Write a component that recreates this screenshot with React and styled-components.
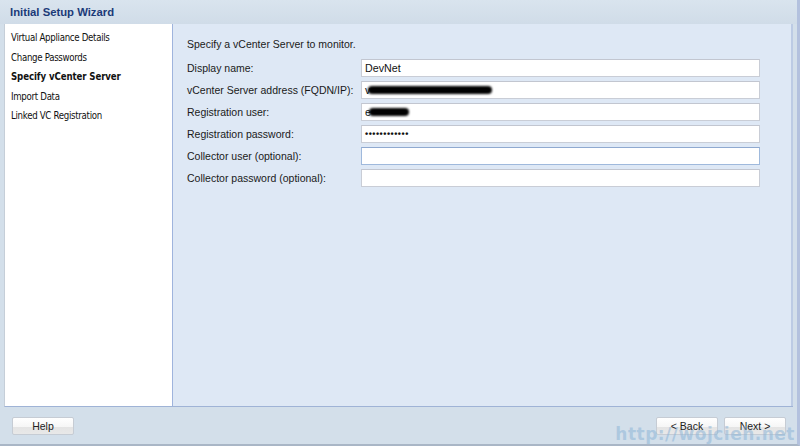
import React from "react";
import styled, { createGlobalStyle } from "styled-components";

const Global = createGlobalStyle`
  html, body { margin: 0; padding: 0; background: #d3dfea; }
  #root { width: 800px; height: 446px; }
`;

const Window = styled.div`
  width: 800px;
  height: 446px;
  box-sizing: border-box;
  background: #d3dfea;
  border-right: 3px solid #b3c1de;
  border-bottom: 2px solid #a9b6c6;
  display: flex;
  flex-direction: column;
  position: relative;
  overflow: hidden;
  font-family: "Liberation Sans", Arial, sans-serif;
`;

const Header = styled.div`
  height: 24px;
  flex: none;
  display: flex;
  align-items: center;
  padding-left: 10px;
  background: linear-gradient(#d9e4ee, #d0dce8);
`;

const Title = styled.div`
  font-family: "Liberation Sans", Arial, sans-serif;
  font-weight: bold;
  font-size: 11.3px;
  color: #1b3a78;
`;

const Body = styled.div`
  flex: 1;
  display: flex;
  margin: 0 4px 0 4px;
  border-left: 1px solid #c5ced8;
  border-bottom: 1px solid #9fb3d6;
`;

const Nav = styled.div`
  width: 167px;
  flex: none;
  background: #ffffff;
  padding-top: 4px;
  display: flex;
  flex-direction: column;
`;

const NavItem = styled.div`
  height: 19.6px;
  line-height: 19.6px;
  padding-left: 6px;
  white-space: nowrap;
  font-family: "DejaVu Sans Condensed", "DejaVu Sans", Tahoma, sans-serif;
  font-stretch: condensed;
  font-size: 9.6px;
  letter-spacing: ${(p) => (p.$active ? "-0.1px" : "-0.3px")};
  color: #111;
  font-weight: ${(p) => (p.$active ? "bold" : "normal")};
`;

const Content = styled.div`
  flex: 1;
  background: #dee8f5;
  border-left: 1px solid #9fb4dd;
  border-right: 2px solid #bccbe4;
  padding: 11px 31px 0 14px;
  display: flex;
  flex-direction: column;
`;

const Intro = styled.div`
  font-size: 10.5px;
  color: #1a1a1a;
  height: 18px;
  line-height: 18px;
  margin-bottom: 6px;
  white-space: nowrap;
`;

const Form = styled.div`
  display: grid;
  grid-template-columns: 174px 1fr;
  row-gap: 4px;
  align-items: center;
`;

const Label = styled.div`
  font-size: 10.5px;
  color: #1a1a1a;
  white-space: nowrap;
`;

const Field = styled.div`
  height: 18px;
  box-sizing: border-box;
  background: #ffffff;
  border: 1px solid ${(p) => (p.$focus ? "#9fb9dc" : "#c9cdd6")};
  border-top-color: ${(p) => (p.$focus ? "#8fa9d0" : "#c2c6d0")};
  display: flex;
  align-items: center;
  padding-left: 3px;
  font-size: 10.7px;
  color: #111;
  overflow: hidden;
`;

const Blob = styled.span`
  display: inline-block;
  height: 8px;
  width: ${(p) => p.$w}px;
  margin-left: -2px;
  background: #000;
  border-radius: 5px;
  filter: blur(1.2px);
`;

const Dots = styled.span`
  font-size: 9px;
  letter-spacing: 0.5px;
  font-weight: bold;
  line-height: 1;
`;

const Footer = styled.div`
  height: 37px;
  flex: none;
  display: flex;
  align-items: center;
  justify-content: space-between;
  padding: 0 11px 0 12px;
`;

const Group = styled.div`
  display: flex;
  gap: 6px;
`;

const Button = styled.div`
  width: 62px;
  height: 18px;
  box-sizing: border-box;
  border: 1px solid #c6ccd4;
  border-radius: 2px;
  background: linear-gradient(#ffffff 0%, #f6f6f6 55%, #e4e4e4 56%, #e8e8e8 100%);
  display: flex;
  align-items: center;
  justify-content: center;
  font-size: 10.5px;
  color: #222;
`;

const Watermark = styled.div`
  position: absolute;
  right: 2px;
  bottom: 0px;
  font-family: "DejaVu Sans", sans-serif;
  font-weight: bold;
  font-size: 17px;
  color: rgba(140, 180, 215, 0.55);
  letter-spacing: 0.5px;
  pointer-events: none;
`;

const navItems = [
  "Virtual Appliance Details",
  "Change Passwords",
  "Specify vCenter Server",
  "Import Data",
  "Linked VC Registration",
];

export default function App() {
  return (
    <>
      <Global />
      <Window>
        <Header>
          <Title>Initial Setup Wizard</Title>
        </Header>
        <Body>
          <Nav>
            {navItems.map((n, i) => (
              <NavItem key={n} $active={i === 2}>
                {n}
              </NavItem>
            ))}
          </Nav>
          <Content>
            <Intro>Specify a vCenter Server to monitor.</Intro>
            <Form>
              <Label>Display name:</Label>
              <Field>DevNet</Field>
              <Label>vCenter Server address (FQDN/IP):</Label>
              <Field>
                v<Blob $w={124} />
              </Field>
              <Label>Registration user:</Label>
              <Field>
                e<Blob $w={40} />
              </Field>
              <Label>Registration password:</Label>
              <Field>
                <Dots>••••••••••••</Dots>
              </Field>
              <Label>Collector user (optional):</Label>
              <Field $focus />
              <Label>Collector password (optional):</Label>
              <Field />
            </Form>
          </Content>
        </Body>
        <Footer>
          <Button>Help</Button>
          <Group>
            <Button>&lt; Back</Button>
            <Button>Next &gt;</Button>
          </Group>
        </Footer>
        <Watermark>http://wojcieh.net</Watermark>
      </Window>
    </>
  );
}
